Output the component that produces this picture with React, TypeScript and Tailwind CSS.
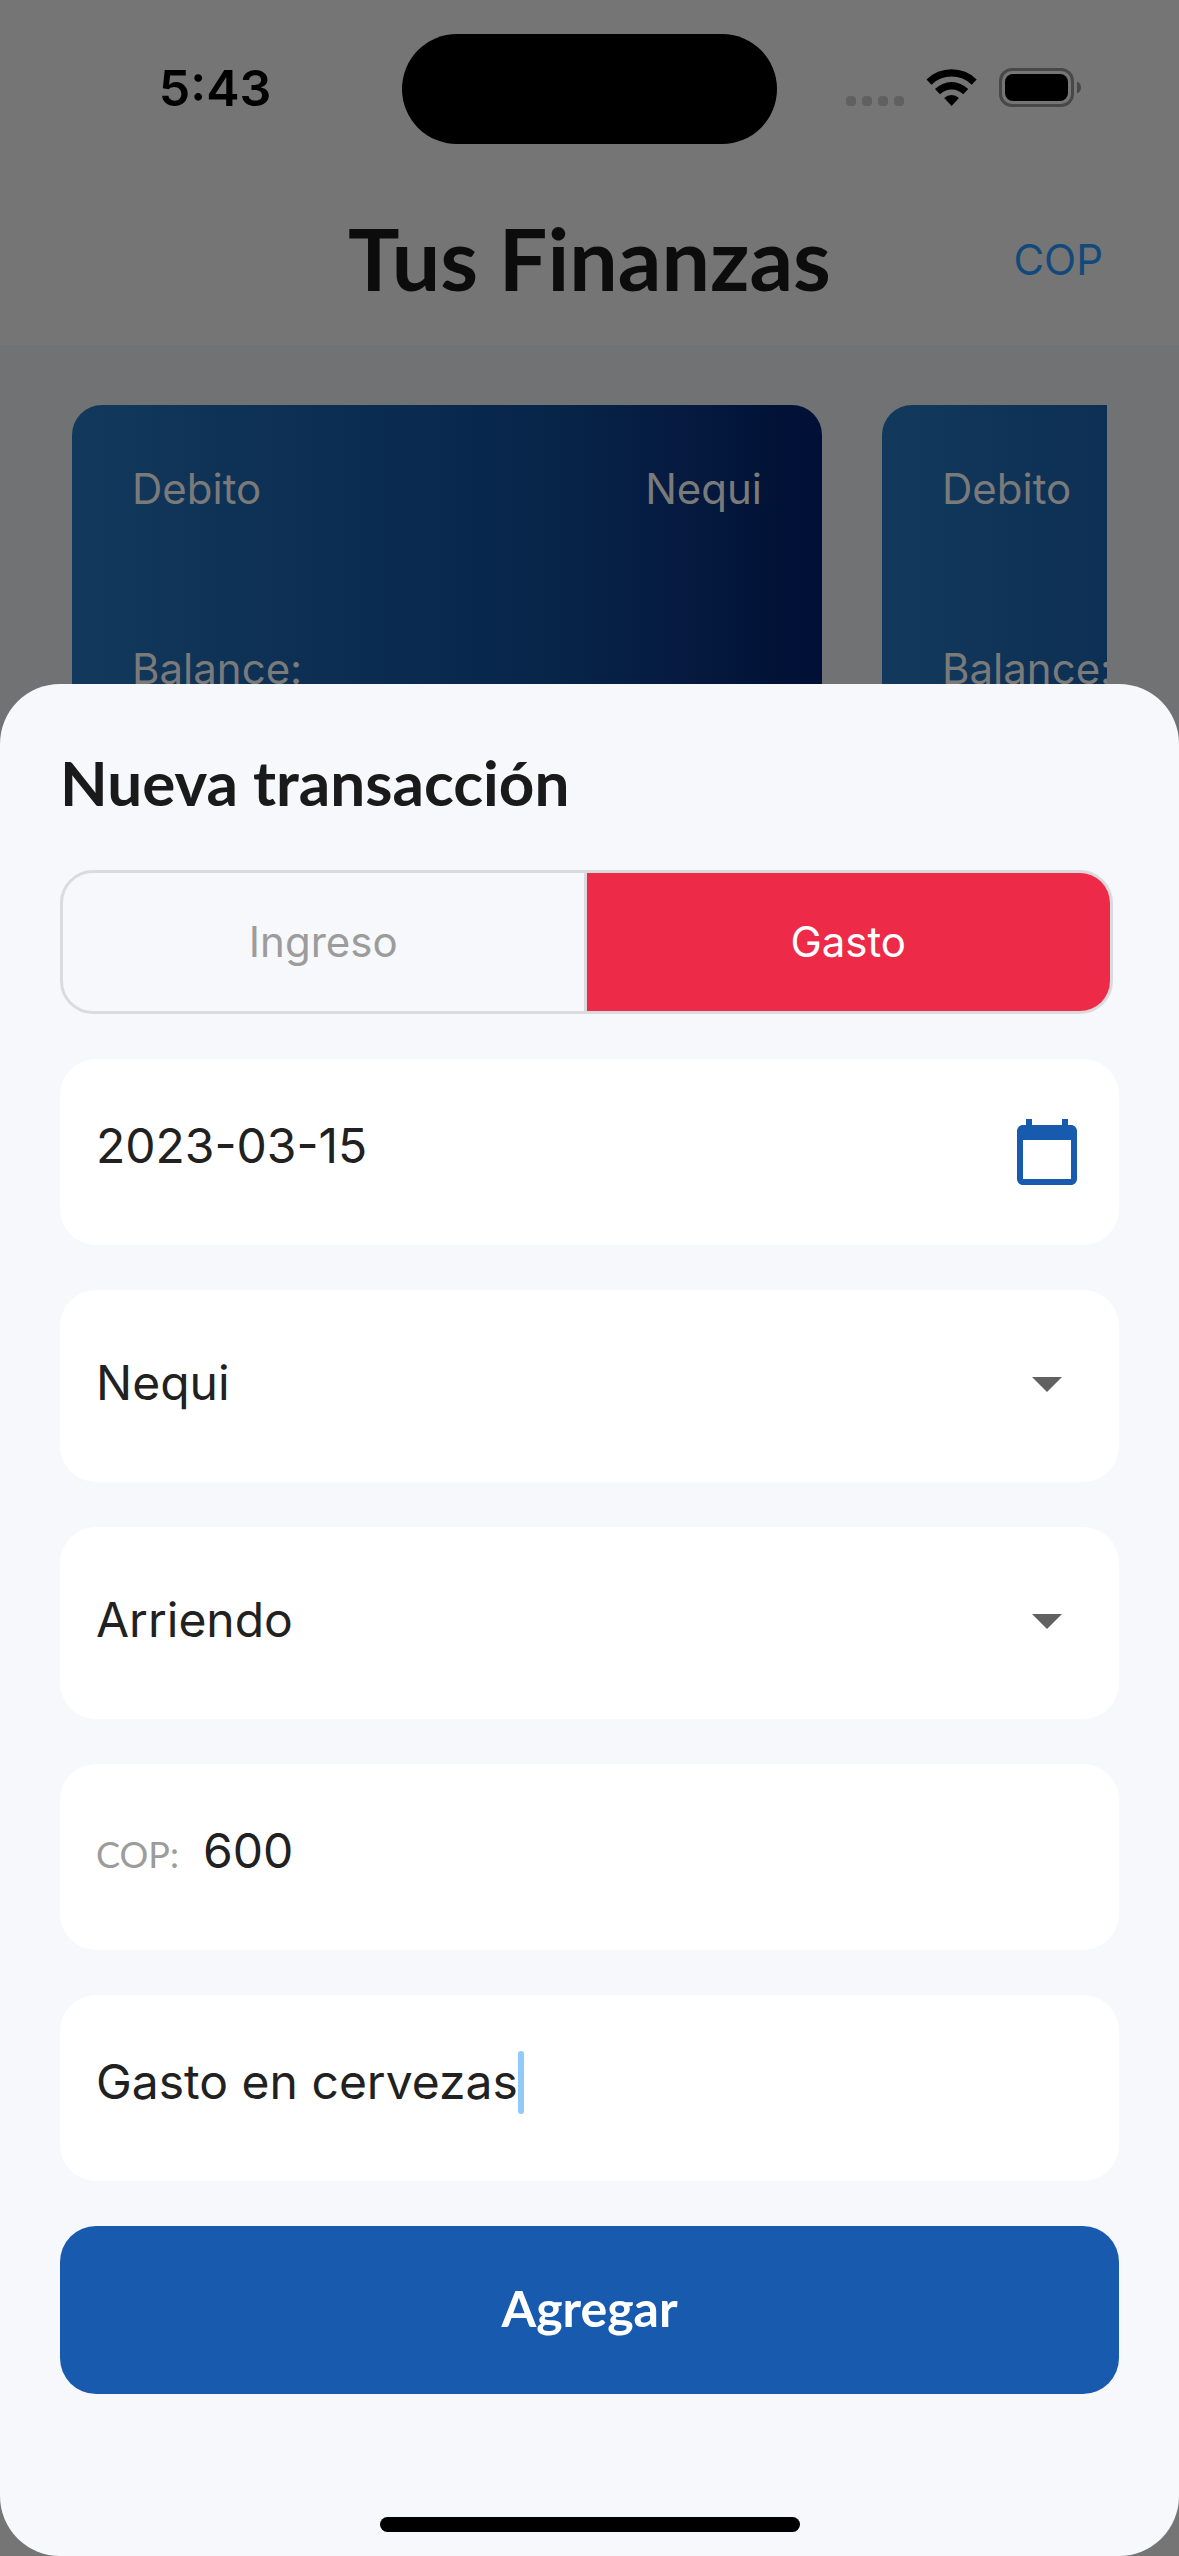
import { useState } from "react";
import type { ReactNode } from "react";

const fieldText = "text-[48px] leading-[60px] text-[#212121]";

function StatusIcons() {
  return (
    <svg className="h-[40px] w-[236px]" viewBox="0 0 236 40" aria-hidden="true">
      <g fill="#606060">
        <rect x="0" y="29" width="10" height="10" rx="4" />
        <rect x="16" y="29" width="10" height="10" rx="4" />
        <rect x="32" y="29" width="10" height="10" rx="4" />
        <rect x="48" y="29" width="10" height="10" rx="4" />
      </g>
      <g fill="#000">
        <path d="M80.500 12.500a35.600 35.600 0 0 1 50.200 0l-5 5.200a28.600 28.600 0 0 0-40.200 0z" />
        <path d="M89 22a23.400 23.400 0 0 1 33.200 0l-5 5.200a16.500 16.500 0 0 0-23.200 0z" />
        <path d="M98.200 31a10.800 10.800 0 0 1 14.800 0l-7.400 8z" />
      </g>
      <rect x="154.500" y="2.500" width="72" height="36" rx="11.500" fill="none" stroke="#484848" strokeWidth="3" />
      <rect x="159" y="7" width="63" height="27" rx="8" fill="#000" />
      <path d="M231 14.500c2.600 1 4 3.300 4 6s-1.400 5-4 6z" fill="#484848" />
    </svg>
  );
}

function CalendarIcon() {
  return (
    <svg className="size-[72px]" viewBox="0 0 24 24" fill="#185bae" aria-hidden="true">
      <path d="M20 3h-1V1h-2v2H7V1H5v2H4c-1.100 0-2 .9-2 2v16c0 1.100.9 2 2 2h16c1.100 0 2-.9 2-2V5c0-1.100-.9-2-2-2zm0 18H4V8h16v13z" />
    </svg>
  );
}

function AccountCard({ bank }: { bank?: string }) {
  return (
    <article className="h-[450px] w-[750px] shrink-0 rounded-[30px] bg-[linear-gradient(90deg,#12395c_0%,#0b2c51_40%,#072449_65%,#061a40_82%,#021338_92%,#011036_100%)] px-[60px] pt-[59px] text-[42px] leading-[50px] text-[#7a7a7a]">
      <div className="flex justify-between">
        <span>Debito</span>
        {bank && <span>{bank}</span>}
      </div>
      <p className="mt-[130px]">Balance:</p>
    </article>
  );
}

function Field({ children }: { children: ReactNode }) {
  return (
    <div className="flex items-baseline rounded-[36px] bg-white px-9 pt-[57px] pb-[69px]">
      {children}
    </div>
  );
}

function SelectField({ label, options }: { label: string; options: string[] }) {
  return (
    <div className="relative rounded-[36px] bg-white">
      <select
        aria-label={label}
        className={`${fieldText} block w-full appearance-none rounded-[36px] bg-transparent px-9 pt-[63px] pb-[69px] outline-none`}
      >
        {options.map((option) => (
          <option key={option}>{option}</option>
        ))}
      </select>
      <svg
        className="pointer-events-none absolute top-[57px] right-9 size-[72px]"
        viewBox="0 0 24 24"
        fill="#616161"
        aria-hidden="true"
      >
        <path d="M7 10l5 5 5-5z" />
      </svg>
    </div>
  );
}

export default function App() {
  const [kind, setKind] = useState("gasto");
  const [date, setDate] = useState("2023-03-15");
  const [amount, setAmount] = useState("600");
  const [note, setNote] = useState("Gasto en cervezas");

  return (
    <main className="grid min-h-screen grid-cols-[minmax(0,1fr)] bg-[#757575] font-['Inter',sans-serif]">
      <div className="flex flex-col [grid-area:1/1]">
        <div className="grid grid-cols-[1fr_375px_1fr] items-center pt-[34px]">
          <time className="justify-self-center pb-0.5 pl-7 text-[50px] leading-[60px] font-semibold text-black">5:43</time>
          <div className="h-[110px] rounded-full bg-black" />
          <div className="justify-self-end pr-[97px] pb-1">
            <StatusIcons />
          </div>
        </div>
        <header className="grid grid-cols-[1fr_auto_1fr] items-center px-[76px] pt-[64px] pb-[37px]">
          <h1 className="col-start-2 font-['Lato',sans-serif] text-[86px] leading-[100px] font-bold text-[#0c0c0c]">
            Tus Finanzas
          </h1>
          <button type="button" className="mt-1 justify-self-end text-[42px] leading-[50px] text-[#114a7a]">
            COP
          </button>
        </header>
        <section className="flex-1 bg-[#717274] px-[72px] pt-[60px]">
          <div className="flex gap-[60px] overflow-hidden">
            <AccountCard bank="Nequi" />
            <AccountCard />
          </div>
        </section>
        <div className="h-[200px]" />
      </div>

      <form
        className="flex flex-col self-end rounded-[60px] bg-[#f7f8fc] px-[60px] pt-[62px] pb-6 [grid-area:1/1]"
        onSubmit={(event) => event.preventDefault()}
      >
        <h2 className="font-['Lato',sans-serif] text-[62px] leading-[72px] font-bold text-[#1a1a1a]">
          Nueva transacción
        </h2>

        <div className="mt-[52px] mr-1.5 grid h-[144px] grid-cols-2 overflow-hidden rounded-[33px] border-3 border-[#d9dbdf] text-[42px] leading-[50px]">
          <button
            type="button"
            aria-pressed={kind === "ingreso"}
            onClick={() => setKind("ingreso")}
            className={`border-r-3 border-[#d9dbdf] ${kind === "ingreso" ? "bg-[#1fa463] text-white" : "text-[#9c9c9c]"}`}
          >
            Ingreso
          </button>
          <button
            type="button"
            aria-pressed={kind === "gasto"}
            onClick={() => setKind("gasto")}
            className={kind === "gasto" ? "bg-[#ed2a47] text-white" : "text-[#9c9c9c]"}
          >
            Gasto
          </button>
        </div>

        <div className="mt-[45px] flex flex-col gap-[45px]">
          <div className="flex items-center rounded-[36px] bg-white px-9">
            <input
              aria-label="Fecha"
              value={date}
              onChange={(event) => setDate(event.target.value)}
              className={`${fieldText} min-w-0 flex-1 pt-[57px] pb-[69px] outline-none`}
            />
            <button type="button" aria-label="Elegir fecha">
              <CalendarIcon />
            </button>
          </div>

          <SelectField label="Cuenta" options={["Nequi", "Bancolombia"]} />
          <SelectField label="Categoría" options={["Arriendo", "Mercado", "Transporte"]} />

          <Field>
            <label htmlFor="amount" className="font-['Lato',sans-serif] text-[36px] leading-10 text-[#9c9c9c]">
              COP:
            </label>
            <input
              id="amount"
              inputMode="numeric"
              value={amount}
              onChange={(event) => setAmount(event.target.value)}
              className={`${fieldText} ml-6 min-w-0 flex-1 outline-none`}
            />
          </Field>

          <Field>
            <input
              aria-label="Descripción"
              value={note}
              onChange={(event) => setNote(event.target.value)}
              className={`${fieldText} field-sizing-content caret-transparent outline-none`}
            />
            <span className="-my-0.5 h-[63px] w-1.5 self-center rounded-full bg-[#90caf9]" />
          </Field>

          <button
            type="submit"
            className="h-[168px] rounded-[36px] bg-[#185bae] pb-1 font-['Lato',sans-serif] text-[50px] leading-[60px] font-bold text-white"
          >
            Agregar
          </button>
        </div>

        <div className="mt-[123px] h-[15px] w-[420px] self-center rounded-full bg-black" />
      </form>
    </main>
  );
}
